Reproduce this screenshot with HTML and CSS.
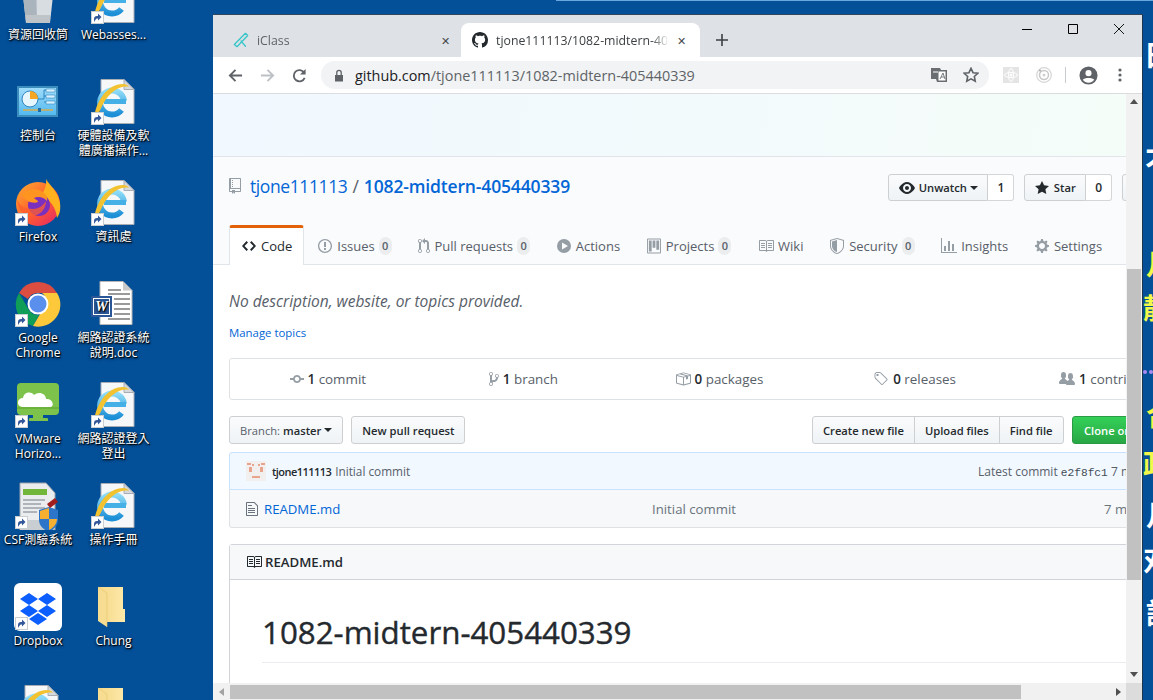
FILE: index.html
```html
<!DOCTYPE html>
<html lang="en">
<head>
  <meta charset="UTF-8">
  <title>Desktop - GitHub</title>
  <link rel="stylesheet" href="styles.css">
</head>
<body>
<svg class="sprite" xmlns="http://www.w3.org/2000/svg">
  <defs>
    <linearGradient id="ieBlue" x1="0" y1="0" x2="0" y2="1"><stop offset="0" stop-color="#8fdcf7"/><stop offset="1" stop-color="#1c8fd6"/></linearGradient>
    <linearGradient id="foxFlame" x1="0" y1="0" x2="1" y2="1"><stop offset="0" stop-color="#ffb02e"/><stop offset=".55" stop-color="#ff5a30"/><stop offset="1" stop-color="#e2216f"/></linearGradient>
    <linearGradient id="folderFill" x1="0" y1="0" x2="1" y2="0"><stop offset="0" stop-color="#f5d889"/><stop offset="1" stop-color="#fde9a9"/></linearGradient>
    <linearGradient id="panelFill" x1="0" y1="0" x2="0" y2="1"><stop offset="0" stop-color="#9fdcfb"/><stop offset="1" stop-color="#55b9ee"/></linearGradient>
  </defs>
  <symbol id="i-repo" viewBox="0 0 12 16"><path d="M4 9H3V8h1v1zm0-3H3v1h1V6zm0-2H3v1h1V4zm0-2H3v1h1V2zm8-1v12c0 .55-.45 1-1 1H6v2l-1.5-1.5L3 16v-2H1c-.55 0-1-.45-1-1V1c0-.55.45-1 1-1h10c.55 0 1 .45 1 1zm-1 10H1v2h2v-1h3v1h5v-2zm0-10H2v9h9V1z"/></symbol>
  <symbol id="i-code" viewBox="0 0 14 16"><path d="M9.5 3L8 4.5 11.5 8 8 11.5 9.5 13 14 8 9.5 3zm-5 0L0 8l4.5 5L6 11.5 2.5 8 6 4.5 4.5 3z"/></symbol>
  <symbol id="i-issue" viewBox="0 0 14 16"><path d="M7 2.3c3.14 0 5.7 2.56 5.7 5.7s-2.56 5.7-5.7 5.7A5.71 5.71 0 011.3 8c0-3.14 2.56-5.7 5.7-5.7zM7 1C3.14 1 0 4.14 0 8s3.14 7 7 7 7-3.14 7-7-3.14-7-7-7zm1 3H6v5h2V4zm0 6H6v2h2v-2z"/></symbol>
  <symbol id="i-pr" viewBox="0 0 12 16"><path d="M11 11.28V5c-.03-.78-.34-1.47-.94-2.06C9.46 2.35 8.78 2.03 8 2H7V0L4 3l3 3V4h1c.27.02.48.11.69.31.21.2.3.42.31.69v6.28A1.993 1.993 0 0010 15a1.993 1.993 0 001-3.72zm-1 2.92c-.66 0-1.2-.55-1.2-1.2 0-.65.55-1.2 1.2-1.2.65 0 1.2.55 1.2 1.2 0 .65-.55 1.2-1.2 1.2zM4 3c0-1.11-.89-2-2-2a1.993 1.993 0 00-1 3.72v6.56A1.993 1.993 0 002 15a1.993 1.993 0 001-3.72V4.72c.59-.34 1-.98 1-1.72zm-.8 10c0 .66-.55 1.2-1.2 1.2-.65 0-1.2-.55-1.2-1.2 0-.65.55-1.2 1.2-1.2.65 0 1.2.55 1.2 1.2zM2 4.2C1.34 4.2.8 3.65.8 3c0-.65.55-1.2 1.2-1.2.65 0 1.2.55 1.2 1.2 0 .65-.55 1.2-1.2 1.2z"/></symbol>
  <symbol id="i-play" viewBox="0 0 14 16"><path fill-rule="evenodd" d="M14 8A7 7 0 110 8a7 7 0 0114 0zM5 4.5v7L11 8 5 4.5z"/></symbol>
  <symbol id="i-project" viewBox="0 0 15 16"><path fill-rule="evenodd" d="M10 12h3V2h-3v10zm-4-2h3V2H6v8zm-4 4h3V2H2v12zm-1 1h13V1H1v14zM14 0H1a1 1 0 00-1 1v14a1 1 0 001 1h13a1 1 0 001-1V1a1 1 0 00-1-1z"/></symbol>
  <symbol id="i-book" viewBox="0 0 16 16"><path d="M3 5h4v1H3V5zm0 3h4V7H3v1zm0 2h4V9H3v1zm11-5h-4v1h4V5zm0 2h-4v1h4V7zm0 2h-4v1h4V9zm2-6v9c0 .55-.45 1-1 1H9.5l-1 1-1-1H2c-.55 0-1-.45-1-1V3c0-.55.45-1 1-1h5.5l1 1 1-1H15c.55 0 1 .45 1 1zm-8 .5L7.5 3H2v9h6V3.5zm7-.5H9.5l-.5.5V12h6V3z"/></symbol>
  <symbol id="i-shield" viewBox="0 0 14 16"><path d="M0 2l7-2 7 2v6.02C14 12.69 8.69 16 7 16c-1.69 0-7-3.31-7-7.98V2zm1 .75v5.268C1 12.012 5.5 15 7 15c1.5 0 6-2.988 6-6.982V2.75l-6-1.7-6 1.7zM7 14V2L2 3.5v4.52C2 11.23 5.4 14 7 14z"/></symbol>
  <symbol id="i-graph" viewBox="0 0 16 16"><path d="M16 14v1H0V0h1v14h15zM5 13H3V8h2v5zm4 0H7V3h2v10zm4 0h-2V6h2v7z"/></symbol>
  <symbol id="i-gear" viewBox="0 0 14 16"><path d="M14 8.77v-1.6l-1.94-.64-.45-1.09.88-1.84-1.13-1.13-1.81.91-1.09-.45-.69-1.92h-1.6l-.63 1.94-1.11.45-1.84-.88-1.13 1.13.91 1.81-.45 1.09L0 7.23v1.59l1.94.64.45 1.09-.88 1.84 1.13 1.13 1.81-.91 1.09.45.69 1.92h1.59l.63-1.94 1.11-.45 1.84.88 1.13-1.13-.92-1.81.47-1.09L14 8.75v.02zM7 11c-1.66 0-3-1.34-3-3s1.34-3 3-3 3 1.34 3 3-1.34 3-3 3z"/></symbol>
  <symbol id="i-eye" viewBox="0 0 16 16"><path d="M8.06 2C3 2 0 8 0 8s3 6 8.06 6C13 14 16 8 16 8s-3-6-7.94-6zM8 12c-2.2 0-4-1.78-4-4 0-2.2 1.8-4 4-4 2.22 0 4 1.8 4 4 0 2.22-1.78 4-4 4zm2-4c0 1.11-.89 2-2 2-1.11 0-2-.89-2-2 0-1.11.89-2 2-2 1.11 0 2 .89 2 2z"/></symbol>
  <symbol id="i-star" viewBox="0 0 14 16"><path d="M14 6l-4.9-.64L7 1 4.9 5.36 0 6l3.6 3.26L2.67 14 7 11.67 11.33 14l-.93-4.74L14 6z"/></symbol>
  <symbol id="i-commit" viewBox="0 0 14 16"><path d="M10.86 7c-.45-1.72-2-3-3.86-3-1.86 0-3.41 1.28-3.86 3H0v2h3.14c.45 1.72 2 3 3.86 3 1.86 0 3.41-1.28 3.86-3H14V7h-3.14zM7 10.2c-1.22 0-2.2-.98-2.2-2.2 0-1.22.98-2.2 2.2-2.2 1.22 0 2.2.98 2.2 2.2 0 1.22-.98 2.2-2.2 2.2z"/></symbol>
  <symbol id="i-branch" viewBox="0 0 10 16"><path d="M10 5c0-1.11-.89-2-2-2a1.993 1.993 0 00-1 3.72v.3c-.02.52-.23.98-.63 1.38-.4.4-.86.61-1.38.63-.83.02-1.48.16-2 .45V4.72a1.993 1.993 0 00-1-3.72C.88 1 0 1.89 0 3a2 2 0 001 1.72v6.56c-.59.35-1 .99-1 1.72 0 1.11.89 2 2 2 1.11 0 2-.89 2-2 0-.53-.2-1-.53-1.36.09-.06.48-.41.59-.47.25-.11.56-.17.94-.17 1.05-.05 1.95-.45 2.75-1.25S8.95 7.77 9 6.73h-.02C9.59 6.37 10 5.73 10 5zM2 1.8c.66 0 1.2.55 1.2 1.2 0 .65-.55 1.2-1.2 1.2C1.35 4.2.8 3.65.8 3c0-.65.55-1.2 1.2-1.2zm0 12.41c-.66 0-1.2-.55-1.2-1.2 0-.65.55-1.2 1.2-1.2.65 0 1.2.55 1.2 1.2 0 .65-.55 1.2-1.2 1.2zm6-8c-.66 0-1.2-.55-1.2-1.2 0-.65.55-1.2 1.2-1.2.65 0 1.2.55 1.2 1.2 0 .65-.55 1.2-1.2 1.2z"/></symbol>
  <symbol id="i-package" viewBox="0 0 16 16"><path d="M1 4.27v7.47c0 .45.3.84.75.97l6.5 1.73c.16.05.34.05.5 0l6.5-1.73c.45-.13.75-.52.75-.97V4.27c0-.45-.3-.84-.75-.97l-6.5-1.74a1.4 1.4 0 00-.5 0L1.75 3.3c-.45.13-.75.52-.75.97zm7 9.09l-6-1.59V5l6 1.61v6.75zM2 4l2.5-.67L11 5.06l-2.5.67L2 4zm13 7.77l-6 1.59V6.61l2-.55V8.5l2-.53V5.53L15 5v6.77zm-2-7.24L6.5 2.8l2-.53L15 4l-2 .53z"/></symbol>
  <symbol id="i-tag" viewBox="0 0 15 16"><path d="M7.73 1.73C7.26 1.26 6.62 1 5.96 1H3.5C2.13 1 1 2.13 1 3.5v2.47c0 .66.27 1.3.73 1.77l6.06 6.06c.39.39 1.02.39 1.41 0l4.59-4.59a.996.996 0 000-1.41L7.73 1.73zM2.38 7.09c-.31-.3-.47-.7-.47-1.13V3.5c0-.88.72-1.59 1.59-1.59h2.47c.42 0 .83.16 1.13.47l6.14 6.13-4.73 4.73-6.13-6.15zM3.01 3h2v2H3V3h.01z"/></symbol>
  <symbol id="i-people" viewBox="0 0 16 16"><path d="M16 12.999c0 .439-.45 1-1 1H7.995c-.539 0-.994-.447-.995-.999H1c-.54 0-1-.561-1-1 0-2.634 3-4 3-4s.229-.409 0-1c-.841-.621-1.058-.59-1-3 .058-2.419 1.367-3 2.5-3s2.442.58 2.5 3c.058 2.41-.159 2.379-1 3-.229.59 0 1 0 1s1.549.711 2.42 2.088C9.196 9.369 10 8.999 10 8.999s.229-.409 0-1c-.841-.62-1.058-.59-1-3 .058-2.419 1.367-3 2.5-3s2.437.581 2.495 3c.059 2.41-.158 2.38-1 3-.229.59 0 1 0 1s3.005 1.366 3.005 4z"/></symbol>
  <symbol id="i-file" viewBox="0 0 12 16"><path d="M6 5H2V4h4v1zM2 8h7V7H2v1zm0 2h7V9H2v1zm0 2h7v-1H2v1zm10-7.5V14c0 .55-.45 1-1 1H1c-.55 0-1-.45-1-1V2c0-.55.45-1 1-1h7.5L12 4.5zM11 5L8 2H1v12h10V5z"/></symbol>
  <symbol id="i-github" viewBox="0 0 16 16"><path d="M8 0C3.58 0 0 3.58 0 8c0 3.54 2.29 6.53 5.47 7.59.4.07.55-.17.55-.38 0-.19-.01-.82-.01-1.49-2.01.37-2.53-.49-2.69-.94-.09-.23-.48-.94-.82-1.13-.28-.15-.68-.52-.01-.53.63-.01 1.08.58 1.23.82.72 1.21 1.87.87 2.33.66.07-.52.28-.87.51-1.07-1.78-.2-3.64-.89-3.64-3.95 0-.87.31-1.59.82-2.15-.08-.2-.36-1.02.08-2.12 0 0 .67-.21 2.2.82.64-.18 1.32-.27 2-.27.68 0 1.36.09 2 .27 1.53-1.04 2.2-.82 2.2-.82.44 1.1.16 1.92.08 2.12.51.56.82 1.27.82 2.15 0 3.07-1.87 3.75-3.65 3.95.29.25.54.73.54 1.48 0 1.07-.01 1.93-.01 2.2 0 .21.15.46.55.38A8.013 8.013 0 0016 8c0-4.42-3.58-8-8-8z"/></symbol>

  <symbol id="d-ie" viewBox="0 0 48 48">
    <path d="M11 1.500h23l10 10v34H11z" fill="#f6f7f9" stroke="#a8adb3"/>
    <path d="M34 1.500v10h10z" fill="#d5d9dd" stroke="#a8adb3"/>
    <path d="M34 23A12 12 0 1 0 31.500 32" fill="none" stroke="url(#ieBlue)" stroke-width="6"/>
    <path d="M14 21h22v5H14z" fill="#45b0e6"/>
    <path d="M4 42C5 24 17 6 33 6c3 0 5 1 6 3-7-2-18 3-26 17-3 6-5 12-9 16z" fill="#f2c230"/>
  </symbol>
  <symbol id="d-recycle" viewBox="0 0 48 48">
    <path d="M7 0h34l-5 46H12z" fill="#d8dde2"/>
    <path d="M7 0h15l1 46H12z" fill="#aab4bd"/>
    <circle cx="25" cy="8" r="9" fill="#3f8fd6"/>
    <path d="M12 38h24v8H12z" fill="#bfc4c9"/>
  </symbol>
  <symbol id="d-panel" viewBox="0 0 48 48">
    <path d="M3 8h41v31H3z" fill="#3c8dbc"/>
    <path d="M5 10h37v27H5z" fill="url(#panelFill)"/>
    <circle cx="16" cy="21" r="8" fill="#e6f6ff" stroke="#2f86c0"/>
    <path d="M16 21v-8a8 8 0 018 8z" fill="#f5a623"/>
    <path d="M24 21h6v-9h6M30 18h6M30 24h6" fill="none" stroke="#2f86c0"/>
    <path d="M32 11h9v3h-9zM32 17h9v3h-9zM32 23h9v3h-9z" fill="#d9f1ff" stroke="#2f86c0" stroke-width=".6"/>
    <path d="M9 32h30" stroke="#f5a623" stroke-width="1.2"/>
    <path d="M24 30h3v4h-3z" fill="#1e6fa8"/>
  </symbol>
  <symbol id="d-firefox" viewBox="0 0 48 48">
    <circle cx="24" cy="25" r="22" fill="url(#foxFlame)"/>
    <path d="M32 0c3 6 12 12 14 24 1 8-1 12-3 15-1-10-6-18-16-22 3-5 6-10 5-17z" fill="#ffb21e"/>
    <circle cx="25" cy="26" r="11" fill="#7b2fbe"/>
    <path d="M8 16c3-5 10-7 17-5 6 2 9 7 8 11-3-4-9-5-13-3 2 2 4 2 4 4-4 2-13 0-16-7z" fill="#ff9420"/>
    <path d="M3 21c3 6 9 9 16 9 5 0 10-3 13-8 0 9-7 15-15 15-7 0-13-6-14-16z" fill="#ff5f2e" opacity=".75"/>
  </symbol>
  <symbol id="d-chrome" viewBox="0 0 48 48">
    <path d="M24 2a22 22 0 0119 11H24a11 11 0 00-10 6L5 13A22 22 0 0124 2z" fill="#db4d40"/>
    <path d="M5 13l10 17a11 11 0 0010 5L19 46A22 22 0 015 13z" fill="#0f9d58"/>
    <path d="M43 13a22 22 0 01-24 33l10-17a11 11 0 00-1-16z" fill="#fdc93b"/>
    <circle cx="24" cy="24" r="10.5" fill="#fff"/>
    <circle cx="24" cy="24" r="8.5" fill="#5a8fee"/>
  </symbol>
  <symbol id="d-word" viewBox="0 0 48 48">
    <path d="M10 1.500h23l9 9v34H10z" fill="#fff" stroke="#b6b6b6"/>
    <path d="M33 1.500v9h9z" fill="#c9c9c9"/>
    <path d="M18 9h13v2H18zM18 13h22v2H18zM24 18h16v2H24zM24 23h16v2H24zM24 28h16v2H24zM24 33h16v2H24zM18 38h22v2H18z" fill="#9a9a9a"/>
    <path d="M1 16h21v21H1z" fill="#2b5797"/>
    <path d="M3 18h17v17H3z" fill="#fff"/>
    <path d="M4 19h15v15H4z" fill="#2b5797"/>
    <text x="11.500" y="31" class="word-w">W</text>
  </symbol>
  <symbol id="d-vmware" viewBox="0 0 48 48">
    <rect x="3" y="2" width="42" height="32" rx="4" fill="#7dc24b"/>
    <path d="M8 26c-6-1-5-9 1-9 1-6 8-7 11-3 4-4 12-2 12 4 7-1 9 8 4 8z" fill="#fff"/>
    <path d="M3 26h42v2H3z" fill="#7dc24b"/>
    <path d="M3 27h42" stroke="#5ca32f"/>
    <path d="M19 34h10v3h4a1 2 0 011 3H15a1 2 0 011-3h3z" fill="#7dc24b"/>
  </symbol>
  <symbol id="d-csf" viewBox="0 0 48 48">
    <path d="M6 1h26l9 10v37H6z" fill="#eaecee" stroke="#9fa5ab"/>
    <path d="M9 7h24v6H9z" fill="#72b73a"/>
    <path d="M9 18h22M9 22h18M9 26h22M9 30h14" stroke="#9aa1a8" stroke-width="1.4"/>
    <path d="M6 38h32v10H6z" fill="#c9ced3"/>
    <path d="M25 28l10-3 9 3v10c0 6-5 10-9 12-5-2-10-6-10-12z" fill="#2d75c8"/>
    <path d="M26 29l9-3v11h-9zM35 37h8c0 5-4 9-8 11z" fill="#f5b032"/>
    <path d="M33 22l8-6 3 4-8 6z" fill="#a01e1e"/>
  </symbol>
  <symbol id="d-dropbox" viewBox="0 0 48 48">
    <rect width="48" height="48" rx="6" fill="#fff"/>
    <path d="M15 10l9 6-9 6-9-6zM33 10l9 6-9 6-9-6zM15 22l9 6-9 6-9-6zM33 22l9 6-9 6-9-6zM24 30l9 6-9 6-9-6z" fill="#0d5eff"/>
  </symbol>
  <symbol id="d-folder" viewBox="0 0 48 48">
    <path d="M8 4h25v22h2v13H16z" fill="url(#folderFill)"/>
    <path d="M8 4l9 6v34l-9-6z" fill="#f6dd92"/>
    <path d="M8 4l9 6v34" fill="none" stroke="#e6c46c" stroke-width=".6"/>
  </symbol>
  <symbol id="d-arrow" viewBox="0 0 13 13">
    <path d="M0 0h13v13H0z" fill="#c9ced3"/>
    <path d="M1 1h11v11H1z" fill="#fff"/>
    <path d="M3 11V8c0-2 1-3 3-3h1V2.500l3.500 3.500L7 9.500V7.500H6c-1 0-1.500 1.500-3 3.500z" fill="#33589a"/>
  </symbol>
</svg>

<div class="desktop">
  <div class="wallpaper-line"></div>

  <div class="icon-grid">
    <div class="d-item"><div class="d-pic"><svg><use href="#d-recycle"/></svg></div><span>資源回收筒</span></div>
    <div class="d-item"><div class="d-pic"><svg><use href="#d-ie"/></svg><svg class="short"><use href="#d-arrow"/></svg></div><span>Webasses...</span></div>
    <div class="d-item"><div class="d-pic"><svg><use href="#d-panel"/></svg></div><span>控制台</span></div>
    <div class="d-item"><div class="d-pic"><svg><use href="#d-ie"/></svg><svg class="short"><use href="#d-arrow"/></svg></div><span>硬體設備及軟<br>體廣播操作...</span></div>
    <div class="d-item"><div class="d-pic"><svg><use href="#d-firefox"/></svg><svg class="short"><use href="#d-arrow"/></svg></div><span>Firefox</span></div>
    <div class="d-item"><div class="d-pic"><svg><use href="#d-ie"/></svg><svg class="short"><use href="#d-arrow"/></svg></div><span>資訊處</span></div>
    <div class="d-item"><div class="d-pic"><svg><use href="#d-chrome"/></svg><svg class="short"><use href="#d-arrow"/></svg></div><span>Google<br>Chrome</span></div>
    <div class="d-item"><div class="d-pic"><svg><use href="#d-word"/></svg></div><span>網路認證系統<br>說明.doc</span></div>
    <div class="d-item"><div class="d-pic"><svg><use href="#d-vmware"/></svg><svg class="short"><use href="#d-arrow"/></svg></div><span>VMware<br>Horizo...</span></div>
    <div class="d-item"><div class="d-pic"><svg><use href="#d-ie"/></svg><svg class="short"><use href="#d-arrow"/></svg></div><span>網路認證登入<br>登出</span></div>
    <div class="d-item"><div class="d-pic"><svg><use href="#d-csf"/></svg><svg class="short"><use href="#d-arrow"/></svg></div><span>CSF測驗系統</span></div>
    <div class="d-item"><div class="d-pic"><svg><use href="#d-ie"/></svg><svg class="short"><use href="#d-arrow"/></svg></div><span>操作手冊</span></div>
    <div class="d-item"><div class="d-pic"><svg><use href="#d-dropbox"/></svg><svg class="short"><use href="#d-arrow"/></svg></div><span>Dropbox</span></div>
    <div class="d-item"><div class="d-pic"><svg><use href="#d-folder"/></svg></div><span>Chung</span></div>
    <div class="d-item"><div class="d-pic"><svg><use href="#d-ie"/></svg></div></div>
    <div class="d-item"><div class="d-pic"><svg><use href="#d-folder"/></svg></div></div>
  </div>

  <div class="bg-text">
    <span class="w t1">日</span>
    <span class="w t2">不</span>
    <span class="y t3">月</span>
    <span class="y t4">靜</span>
    <span class="dots"><i></i><i></i></span>
    <span class="y t5">合</span>
    <span class="y t6">政</span>
    <span class="w t7">月</span>
    <span class="w t8">对</span>
    <span class="w t9">記</span>
  </div>

  <div class="window">
    <div class="tabstrip">
      <div class="tab">
        <svg class="favicon" viewBox="0 0 18 18"><path d="M1.500 14l3 2.500L16.500 4 14 1.500zM9 10l5 6" fill="none" stroke="#36c6c9" stroke-width="1.500" stroke-linejoin="round" stroke-linecap="round"/></svg>
        <span class="tab-title">iClass</span>
        <span class="tab-x">✕</span>
      </div>
      <div class="tab tab-on">
        <svg class="favicon icon-fill"><use href="#i-github"/></svg>
        <span class="tab-title">tjone111113/1082-midtern-405440339</span>
        <span class="tab-x">✕</span>
      </div>
      <svg class="newtab" viewBox="0 0 12 12"><path d="M6 0v12M0 6h12" stroke="#3c4043" stroke-width="1.600"/></svg>
      <div class="win-btns">
        <svg viewBox="0 0 10 10"><path d="M0 5.500h10" stroke="#000"/></svg>
        <svg viewBox="0 0 10 10"><path d="M.5.500h9v9h-9z" fill="none" stroke="#000"/></svg>
        <svg viewBox="0 0 10 10"><path d="M0 0l10 10M10 0L0 10" stroke="#000" stroke-width=".9"/></svg>
      </div>
    </div>

    <div class="toolbar">
      <svg class="nav" viewBox="0 0 16 16"><path d="M15 8H2M8 2L2 8l6 6" fill="none" stroke="#5f6368" stroke-width="2"/></svg>
      <svg class="nav" viewBox="0 0 16 16"><path d="M1 8h13M8 2l6 6-6 6" fill="none" stroke="#bdc1c6" stroke-width="2"/></svg>
      <svg class="nav" viewBox="0 0 16 16"><path d="M13.500 10.500A6 6 0 1113 5" fill="none" stroke="#5f6368" stroke-width="2"/><path d="M14.500 1v6h-6z" fill="#5f6368"/></svg>
      <div class="omnibox">
        <svg class="lock" viewBox="0 0 10 13"><path d="M1 6h8v6.500H1z" fill="#5f6368"/><path d="M2.800 6V3.500a2.200 2.200 0 014.400 0V6" fill="none" stroke="#5f6368" stroke-width="1.300"/></svg>
        <span class="url">github.com<span class="url-dim">/tjone111113/1082-midtern-405440339</span></span>
        <svg class="omni-ic" viewBox="0 0 16 16"><path d="M0 1h9l1 2h6v12H6l-1-3H0z" fill="#6a6e73"/><path d="M7 4h8v10H7z" fill="#fff" stroke="#6a6e73"/><path d="M3 8h4M5 5v5M9 12l3-6 2 6M10 10h3" fill="none" stroke="#6a6e73" stroke-width=".9"/><path d="M2 5h5" stroke="#fff"/></svg>
        <svg class="omni-ic" viewBox="0 0 14 14"><path d="M7 1.200l1.800 3.800 4.200.5-3.100 2.800.8 4.100L7 10.400l-3.700 2 .8-4.100L1 5.500l4.200-.5z" fill="none" stroke="#5f6368" stroke-width="1.400"/></svg>
      </div>
      <svg class="ext" viewBox="0 0 16 16"><path d="M0 0h16v16H0z" fill="#e4e4e4"/><ellipse cx="8" cy="8" rx="6.500" ry="2.500" fill="none" stroke="#fff"/><ellipse cx="8" cy="8" rx="2.500" ry="6.500" fill="none" stroke="#fff"/><circle cx="8" cy="8" r="1.500" fill="#fff"/></svg>
      <svg class="ext" viewBox="0 0 16 16"><circle cx="8" cy="8" r="7.300" fill="none" stroke="#d5d5d5" stroke-width="1.200"/><circle cx="8" cy="8" r="4.500" fill="none" stroke="#c8c8c8" stroke-width="1.500"/><circle cx="8" cy="8" r="1.500" fill="#d0d0d0"/><circle cx="4" cy="3.500" r="1" fill="#a8a8a8"/></svg>
      <div class="tool-sep"></div>
      <svg class="avatar" viewBox="0 0 20 20"><circle cx="10" cy="10" r="9.500" fill="#5f6368"/><circle cx="10" cy="7.500" r="3.200" fill="#fff"/><path d="M4 14.500c1.500-2.500 10.500-2.500 12 0-1.500 2.200-3.500 3-6 3s-4.500-.8-6-3z" fill="#fff"/></svg>
      <svg class="menu-dots" viewBox="0 0 4 14"><circle cx="2" cy="2" r="1.600" fill="#5f6368"/><circle cx="2" cy="7" r="1.600" fill="#5f6368"/><circle cx="2" cy="12" r="1.600" fill="#5f6368"/></svg>
    </div>

    <div class="viewport">
      <div class="page">
        <div class="banner"></div>
        <div class="pagehead">
          <div class="repo-row">
            <h1 class="repo-title">
              <svg class="oct repo-ic"><use href="#i-repo"/></svg>
              <a class="repo-owner">tjone111113</a> <span class="slash">/</span> <a class="repo-name">1082-midtern-405440339</a>
            </h1>
            <div class="repo-actions">
              <div class="btn-pair"><span class="btn sm"><svg class="oct dark wide"><use href="#i-eye"/></svg>Unwatch<i class="caret"></i></span><span class="count">1</span></div>
              <div class="btn-pair"><span class="btn sm"><svg class="oct dark"><use href="#i-star"/></svg>Star</span><span class="count">0</span></div>
              <div class="btn-pair"><span class="btn sm"><svg class="oct dark fork-ic"><use href="#i-branch"/></svg>Fork</span><span class="count">0</span></div>
            </div>
          </div>
          <nav class="repo-tabs">
            <a class="rtab active"><svg class="oct dark"><use href="#i-code"/></svg>Code</a>
            <a class="rtab"><svg class="oct"><use href="#i-issue"/></svg>Issues<span class="pill">0</span></a>
            <a class="rtab"><svg class="oct pr-ic"><use href="#i-pr"/></svg>Pull requests<span class="pill">0</span></a>
            <a class="rtab"><svg class="oct"><use href="#i-play"/></svg>Actions</a>
            <a class="rtab"><svg class="oct"><use href="#i-project"/></svg>Projects<span class="pill">0</span></a>
            <a class="rtab"><svg class="oct wide"><use href="#i-book"/></svg>Wiki</a>
            <a class="rtab"><svg class="oct"><use href="#i-shield"/></svg>Security<span class="pill">0</span></a>
            <a class="rtab"><svg class="oct wide"><use href="#i-graph"/></svg>Insights</a>
            <a class="rtab"><svg class="oct"><use href="#i-gear"/></svg>Settings</a>
          </nav>
        </div>

        <div class="container">
          <p class="desc">No description, website, or topics provided.</p>
          <a class="manage">Manage topics</a>

          <ul class="summary">
            <li><svg class="oct"><use href="#i-commit"/></svg><b>1</b> commit</li>
            <li><svg class="oct branch-ic"><use href="#i-branch"/></svg><b>1</b> branch</li>
            <li><svg class="oct wide"><use href="#i-package"/></svg><b>0</b> packages</li>
            <li><svg class="oct wide"><use href="#i-tag"/></svg><b>0</b> releases</li>
            <li><svg class="oct wide"><use href="#i-people"/></svg><b>1</b> contributor</li>
          </ul>

          <div class="file-nav">
            <div class="nav-left">
              <span class="btn"><em>Branch:</em> master<i class="caret"></i></span>
              <span class="btn">New pull request</span>
            </div>
            <div class="nav-right">
              <div class="btn-group">
                <span class="btn">Create new file</span>
                <span class="btn">Upload files</span>
                <span class="btn">Find file</span>
              </div>
              <span class="btn green">Clone or download<i class="caret"></i></span>
            </div>
          </div>

          <div class="commit-bar">
            <svg class="avatar-sm" viewBox="0 0 20 20"><path d="M0 0h20v20H0z" fill="#f2f0ee"/><path d="M1 2h4v2H1zM15 2h4v2h-4zM3 6h3v5H3zM14 6h3v5h-3zM6 3h2v2H6zM12 3h2v2h-2zM6 15h8v2H6z" fill="#e8a48f"/></svg>
            <b class="author">tjone111113</b>
            <span class="cmsg">Initial commit</span>
            <span class="latest">Latest commit <code>e2f8fc1</code> 7 minutes ago</span>
          </div>
          <div class="file-row">
            <span class="fname"><svg class="oct file-ic"><use href="#i-file"/></svg><a>README.md</a></span>
            <span class="fmsg">Initial commit</span>
            <span class="fage">7 minutes ago</span>
          </div>

          <div class="readme">
            <div class="readme-head"><svg class="oct dark"><use href="#i-book"/></svg>README.md</div>
            <div class="readme-body">
              <h2>1082-midtern-405440339</h2>
            </div>
          </div>
        </div>
      </div>

      <div class="vbar">
        <i class="arrow up"></i>
        <div class="vthumb"></div>
        <i class="arrow down"></i>
      </div>
      <div class="hbar">
        <i class="arrow left"></i>
        <div class="hthumb"></div>
        <i class="arrow right"></i>
      </div>
      <div class="corner"></div>
    </div>
  </div>
</div>
</body>
</html>
```

FILE: styles.css
```css
html, body {
  margin: 0;
  padding: 0;
  height: 100%;
  overflow: hidden;
}
body {
  font-family: "Open Sans", "Noto Sans CJK TC", sans-serif;
  color: #24292e;
  background: #034f98;
}
.sprite {
  position: absolute;
  width: 0;
  height: 0;
}
.word-w {
  font-family: "Liberation Serif", serif;
  font-size: 14px;
  font-weight: 700;
  font-style: italic;
  fill: #fff;
  text-anchor: middle;
}
.desktop {
  position: relative;
  width: 1153px;
  height: 700px;
  overflow: hidden;
  background: #034f98;
}
.wallpaper-line {
  height: 1px;
  margin-left: 556px;
  background: #6aa6de;
}

/* desktop icons */
.icon-grid {
  position: absolute;
  left: 0;
  top: -25px;
  display: grid;
  grid-template-columns: 76px 75px;
  grid-auto-rows: 101px;
}
.d-item {
  display: flex;
  flex-direction: column;
  align-items: center;
  padding-top: 2px;
  color: #fff;
  font-size: 12px;
  line-height: 15px;
  text-align: center;
  text-shadow: 1px 1px 1px #000, 0 1px 3px #000;
  white-space: nowrap;
}
.d-pic {
  position: relative;
  width: 48px;
  height: 48px;
  margin-bottom: 2px;
}
.d-pic svg {
  display: block;
  width: 48px;
  height: 48px;
}
.d-pic .short {
  position: absolute;
  left: 1px;
  bottom: 1px;
  width: 13px;
  height: 13px;
}

/* clipped wallpaper text behind the browser */
.bg-text span {
  position: absolute;
  left: 1146px;
  font-size: 28px;
  line-height: 30px;
  font-weight: 700;
}
.bg-text .w { color: #fff; }
.bg-text .y { color: #f2f84a; }
.bg-text .t1 { top: 40px; left: 1144px; }
.bg-text .t2 { top: 146px; left: 1145px; }
.bg-text .t3 { top: 249px; }
.bg-text .t4 { top: 293px; left: 1143px; }
.bg-text .t5 { top: 400px; }
.bg-text .t6 { top: 449px; left: 1143px; }
.bg-text .t7 { top: 500px; }
.bg-text .t8 { top: 545px; left: 1143px; }
.bg-text .t9 { top: 598px; }
.bg-text .dots {
  top: 370px;
  left: 1143px;
  display: flex;
  align-items: flex-start;
  gap: 2px;
}
.dots i {
  width: 4px;
  height: 4px;
  border-radius: 50%;
  background: #a98bf0;
}

/* browser window */
.window {
  position: absolute;
  left: 213px;
  top: 14px;
  width: 930px;
  height: 686px;
  display: flex;
  flex-direction: column;
  background: #fff;
  border-top: 1px solid #33475c;
  border-right: 1px solid #1c3550;
  box-sizing: border-box;
}
.tabstrip {
  display: flex;
  align-items: flex-end;
  height: 42px;
  flex: none;
  padding-left: 12px;
  background: #dee1e6;
}
.tab {
  display: flex;
  align-items: center;
  width: 236px;
  height: 34px;
  box-sizing: border-box;
  padding: 0 8px;
  font-size: 12.3px;
  color: #5f6368;
}
.tab-on {
  width: 239px;
  padding: 0 11px;
  background: #fff;
  color: #3c4043;
  border-radius: 8px 8px 0 0;
}
.favicon {
  flex: none;
  width: 16px;
  height: 16px;
  margin-right: 8px;
}
.icon-fill { fill: #24292e; }
.tab-title {
  flex: 1;
  overflow: hidden;
  white-space: nowrap;
  -webkit-mask-image: linear-gradient(to right, #000 90%, transparent);
  mask-image: linear-gradient(to right, #000 90%, transparent);
}
.tab-x {
  flex: none;
  width: 16px;
  margin-left: 4px;
  font-size: 11px;
  color: #45494d;
  text-align: center;
}
.newtab {
  width: 12px;
  height: 12px;
  margin: 0 0 11px 16px;
}
.win-btns {
  display: flex;
  gap: 36px;
  margin-left: auto;
  margin-right: 18px;
  align-self: flex-start;
  padding-top: 9px;
}
.win-btns svg {
  display: block;
  width: 10px;
  height: 10px;
}

.toolbar {
  display: flex;
  align-items: center;
  flex: none;
  height: 37px;
  box-sizing: border-box;
  padding-left: 15px;
  background: #fff;
  border-bottom: 1px solid #dadce0;
}
.nav {
  width: 15px;
  height: 15px;
  margin-right: 17px;
}
.omnibox {
  display: flex;
  align-items: center;
  width: 668px;
  height: 28px;
  margin-left: -3px;
  box-sizing: border-box;
  padding: 0 10px 0 13px;
  background: #f1f3f4;
  border-radius: 14px;
}
.lock {
  width: 10px;
  height: 13px;
  margin-right: 11px;
}
.url {
  flex: 1;
  font-size: 14.4px;
  color: #202124;
  white-space: nowrap;
}
.url-dim { color: #5f6368; }
.omni-ic {
  width: 16px;
  height: 16px;
  margin-left: 16px;
}
.ext {
  width: 16px;
  height: 16px;
  margin-left: 14px;
}
.ext + .ext { margin-left: 17px; }
.tool-sep {
  width: 1px;
  height: 16px;
  margin: 0 13px 0 13px;
  background: #c8cbd0;
}
.avatar {
  width: 19px;
  height: 19px;
}
.menu-dots {
  width: 4px;
  height: 14px;
  margin-left: 20px;
}

/* page area with fake scrollbars */
.viewport {
  flex: 1;
  min-height: 0;
  display: grid;
  grid-template-columns: 913px 16px;
  grid-template-rows: 1fr 17px;
}
.page {
  overflow: hidden;
  background: #fff;
  font-size: 13.2px;
}
.banner {
  height: 63px;
  background: linear-gradient(100deg, #f1f8ff 0%, #f4fbfb 70%, #f4fdf8 100%);
  border-bottom: 1px solid #e1e4e8;
  box-sizing: border-box;
}
.pagehead {
  width: 1012px;
  box-sizing: border-box;
  padding: 0 16px;
  background: #fafbfc;
  border-bottom: 1px solid #e1e4e8;
}
.repo-row {
  display: flex;
  justify-content: space-between;
  height: 68px;
  padding-top: 17px;
  box-sizing: border-box;
}
.repo-title {
  display: flex;
  align-items: center;
  gap: 5px;
  height: 23px;
  margin: 0;
  font-size: 17.5px;
  font-weight: 400;
  white-space: nowrap;
}
.repo-title a { color: #0366d6; }
.repo-owner { letter-spacing: -.4px; }
.repo-name {
  font-weight: 600;
  letter-spacing: -.15px;
}
.slash { color: #586069; }
.oct {
  flex: none;
  width: 14px;
  height: 16px;
  margin-right: 5px;
  fill: #959da5;
  vertical-align: -3px;
}
.oct.dark { fill: #24292e; }
.oct.wide {
  width: 16px;
  margin-right: 4px;
}
.oct.pr-ic {
  width: 12px;
  margin-right: 4px;
}
.oct.fork-ic { width: 11px; }
.repo-ic {
  width: 12px;
  margin-right: 4px;
}
.repo-actions {
  display: flex;
  gap: 10px;
}
.btn-pair { display: flex; }
.btn {
  display: inline-flex;
  align-items: center;
  box-sizing: border-box;
  height: 28px;
  padding: 0 10px;
  font-size: 11.2px;
  font-weight: 600;
  color: #24292e;
  white-space: nowrap;
  background: linear-gradient(#fafbfc, #eff3f6);
  border: 1px solid #cdcfd1;
  border-radius: 3px;
}
.btn.sm {
  height: 27px;
  padding: 0 9.5px;
  border-radius: 3px 0 0 3px;
}
.btn em {
  font-style: normal;
  color: #586069;
  margin-right: 3px;
  font-weight: 400;
}
.count {
  display: flex;
  align-items: center;
  box-sizing: border-box;
  height: 27px;
  padding: 0 9px;
  font-size: 12px;
  font-weight: 600;
  background: #fff;
  border: 1px solid #d4d6d8;
  border-left: 0;
  border-radius: 0 3px 3px 0;
}
.caret {
  width: 0;
  height: 0;
  margin-left: 3px;
  border: 4px solid transparent;
  border-top-color: currentColor;
  border-bottom: 0;
}
.repo-tabs {
  display: flex;
  height: 40px;
  margin-bottom: -1px;
}
.rtab {
  display: flex;
  align-items: center;
  box-sizing: border-box;
  height: 40px;
  padding: 1px 26.7px 0 0;
  color: #586069;
  white-space: nowrap;
  font-size: 13px;
}
.rtab.active {
  padding: 0 11px 1px 12px;
  margin-right: 14px;
  color: #24292e;
  background: #fff;
  border: 1px solid #e1e4e8;
  border-top: 3px solid #e36209;
  border-bottom: 0;
  border-radius: 3px 3px 0 0;
}
.pill {
  min-width: 7px;
  margin-left: 4px;
  padding: 0 3px;
  font-size: 11px;
  line-height: 18px;
  font-weight: 600;
  text-align: center;
  color: #586069;
  background: #ebedef;
  border-radius: 10px;
}

.container {
  width: 980px;
  margin-left: 16px;
}
.desc {
  margin: 25px 0 0;
  font-size: 15.5px;
  line-height: 22px;
  font-style: italic;
  color: #586069;
}
.manage {
  display: block;
  margin-top: 12px;
  font-size: 11.4px;
  line-height: 18px;
  color: #0366d6;
}
.summary {
  display: flex;
  height: 42px;
  box-sizing: border-box;
  margin: 16px 0 0;
  padding: 0;
  list-style: none;
  font-size: 13.4px;
  color: #586069;
  border: 1px solid #dfe2e5;
  border-radius: 3px;
}
.summary li {
  flex: 1;
  display: flex;
  align-items: center;
  justify-content: center;
  white-space: pre;
}
.summary b {
  color: #24292e;
  font-weight: 600;
}
.summary .oct { margin-right: 4px; }
.oct.branch-ic { width: 10px; }
.file-nav {
  display: flex;
  justify-content: space-between;
  margin-top: 16px;
}
.nav-left,
.nav-right {
  display: flex;
  gap: 8px;
}
.btn-group { display: flex; }
.btn-group .btn {
  border-radius: 0;
  margin-left: -1px;
}
.btn-group .btn:first-child { border-radius: 3px 0 0 3px; }
.btn-group .btn:last-child { border-radius: 0 3px 3px 0; }
.btn.green {
  color: #fff;
  padding: 0 11.5px;
  background: linear-gradient(#34d058, #28a745);
  border-color: #2b9a45;
}
.commit-bar {
  display: flex;
  align-items: center;
  height: 38px;
  box-sizing: border-box;
  margin-top: 8px;
  padding: 0 18px 0 16px;
  font-size: 11.8px;
  color: #586069;
  background: #f1f8ff;
  border: 1px solid #c8e1ff;
  border-radius: 3px 3px 0 0;
}
.avatar-sm {
  width: 20px;
  height: 20px;
  margin-right: 6px;
}
.author {
  color: #24292e;
  font-weight: 600;
  font-size: 11px;
  letter-spacing: -.55px;
  margin-right: 4px;
}
.latest {
  margin-left: auto;
  font-size: 12px;
  white-space: nowrap;
}
code {
  font-family: "Liberation Mono", monospace;
  font-size: 11.2px;
  color: #444d56;
}
.file-row {
  display: grid;
  grid-template-columns: 406px 1fr auto;
  align-items: center;
  height: 38px;
  box-sizing: border-box;
  padding: 0 17px 0 16px;
  font-size: 13.2px;
  color: #6a737d;
  background: #f6f8fa;
  border: 1px solid #dfe2e5;
  border-top: 0;
  border-radius: 0 0 3px 3px;
}
.fname {
  display: flex;
  align-items: center;
}
.fname a { color: #0366d6; }
.file-ic {
  width: 12px;
  margin-right: 6px;
  fill: #6a737d;
}
.readme {
  margin-top: 16px;
  border: 1px solid #d1d5da;
  border-radius: 3px;
  background: #fff;
}
.readme-head {
  display: flex;
  align-items: center;
  height: 34px;
  padding-left: 16px;
  font-weight: 600;
  font-size: 13.2px;
  background: #f6f8fa;
  border-bottom: 1px solid #d1d5da;
}
.readme-head .oct {
  width: 16px;
  margin-right: 3px;
}
.readme-body { padding: 32px 32px 40px; }
.readme-body h2 {
  margin: 0;
  padding-bottom: 10px;
  font-size: 31.3px;
  line-height: 40px;
  font-weight: 400;
  -webkit-text-stroke: .4px #24292e;
  white-space: nowrap;
  border-bottom: 1px solid #eaecef;
}

.vbar {
  display: flex;
  flex-direction: column;
  align-items: center;
  background: #f1f1f1;
}
.vthumb {
  width: 14px;
  height: 311px;
  margin-top: 165px;
  background: #c1c1c1;
}
.hbar {
  display: flex;
  align-items: center;
  background: #f1f1f1;
}
.hthumb {
  width: 791px;
  height: 14px;
  margin-left: 6px;
  background: #c1c1c1;
}
.corner { background: #dcdcdc; }
.arrow {
  flex: none;
  width: 0;
  height: 0;
  border: 4px solid transparent;
}
.arrow.up {
  margin-top: 5px;
  border-top: 0;
  border-bottom: 5px solid #505050;
}
.arrow.down {
  margin-top: auto;
  margin-bottom: 6px;
  border-bottom: 0;
  border-top: 5px solid #505050;
}
.arrow.left {
  margin-left: 6px;
  border-left: 0;
  border-right: 5px solid #a3a3a3;
}
.arrow.right {
  margin-left: auto;
  margin-right: 5px;
  border-right: 0;
  border-left: 5px solid #505050;
}
```
